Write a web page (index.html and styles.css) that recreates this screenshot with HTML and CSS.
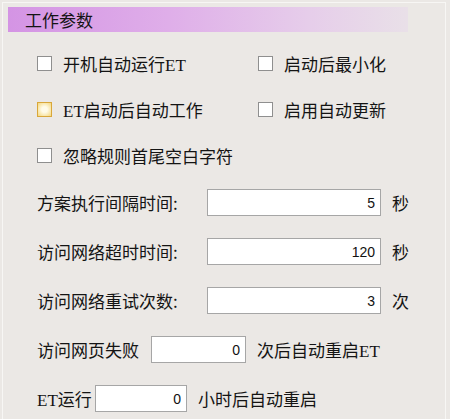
FILE: index.html
```html
<!DOCTYPE html>
<html lang="zh-CN">
<head>
    <meta charset="UTF-8">
    <title>工作参数</title>
    <link rel="stylesheet" href="styles.css">
</head>
<body>
    <div class="panel">
        <div class="title-bar">工作参数</div>

        <div class="checks">
            <label class="check"><span class="box"></span><span class="lat">开机自动运行ET</span></label>
            <label class="check"><span class="box"></span>启动后最小化</label>
            <label class="check"><span class="box box-hot"></span><span class="lat">ET启动后自动工作</span></label>
            <label class="check"><span class="box"></span>启用自动更新</label>
            <label class="check"><span class="box"></span>忽略规则首尾空白字符</label>
        </div>

        <div class="field-row">
            <span class="field-label">方案执行间隔时间:</span>
            <input class="num num-long" type="text" value="5">
            <span class="unit">秒</span>
        </div>
        <div class="field-row">
            <span class="field-label">访问网络超时时间:</span>
            <input class="num num-long" type="text" value="120">
            <span class="unit">秒</span>
        </div>
        <div class="field-row">
            <span class="field-label">访问网络重试次数:</span>
            <input class="num num-long" type="text" value="3">
            <span class="unit">次</span>
        </div>
        <div class="field-row">
            <span class="fail-label">访问网页失败</span>
            <input class="num num-mid" type="text" value="0">
            <span class="unit lat">次后自动重启ET</span>
        </div>
        <div class="field-row">
            <span class="run-label lat">ET运行</span>
            <input class="num num-small" type="text" value="0">
            <span class="unit">小时后自动重启</span>
        </div>
    </div>
</body>
</html>
```

FILE: styles.css
```css
* {
    margin: 0;
    padding: 0;
    box-sizing: border-box;
}

body {
    background-color: #ebe8e5;
    font-family: "Noto Sans CJK SC", sans-serif;
    font-size: 17px;
    color: #141414;
    overflow: hidden;
}

.panel {
    margin: 2px 4px 0 2px;
    height: 417px;
    border-top: 1px solid #f7f6f4;
    border-left: 1px solid #f7f6f4;
    border-right: 1px solid #f7f6f4;
    padding: 4px 0 0 5px;
}

.title-bar {
    width: 400px;
    height: 25px;
    line-height: 25px;
    padding-left: 17px;
    font-size: 17px;
    background: linear-gradient(to right, #d494e4 0%, #dfaee9 40%, #e6cdea 75%, #e9e0e8 100%);
}

.lat {
    font-family: "Liberation Serif", "Noto Sans CJK SC", serif;
}

.checks {
    display: grid;
    grid-template-columns: 221px auto;
    grid-auto-rows: 46px;
    margin-top: 8px;
    padding-left: 29px;
}

.check {
    display: flex;
    align-items: center;
    white-space: nowrap;
}

.box {
    flex-shrink: 0;
    width: 15px;
    height: 15px;
    margin-right: 11px;
    background-color: #fff;
    border: 1px solid #8f8f8f;
}

.box-hot {
    border: 1px solid #d9a73a;
    background: radial-gradient(circle, #fffbe8 30%, #f4d77c 100%);
}

.field-row {
    display: flex;
    align-items: center;
    height: 49px;
    padding-left: 29px;
    white-space: nowrap;
}

.field-label {
    width: 170px;
}

.fail-label {
    width: 114px;
}

.run-label {
    width: 58px;
}

.num {
    flex-shrink: 0;
    height: 27px;
    border: 1px solid #a6a6a6;
    background-color: #fff;
    font-family: "Liberation Sans", sans-serif;
    font-size: 14px;
    color: #111;
    text-align: right;
    padding-right: 5px;
    outline: none;
}

.num-long {
    width: 174px;
}

.num-mid {
    width: 95px;
}

.num-small {
    width: 92px;
}

.unit {
    margin-left: 11px;
}
```
